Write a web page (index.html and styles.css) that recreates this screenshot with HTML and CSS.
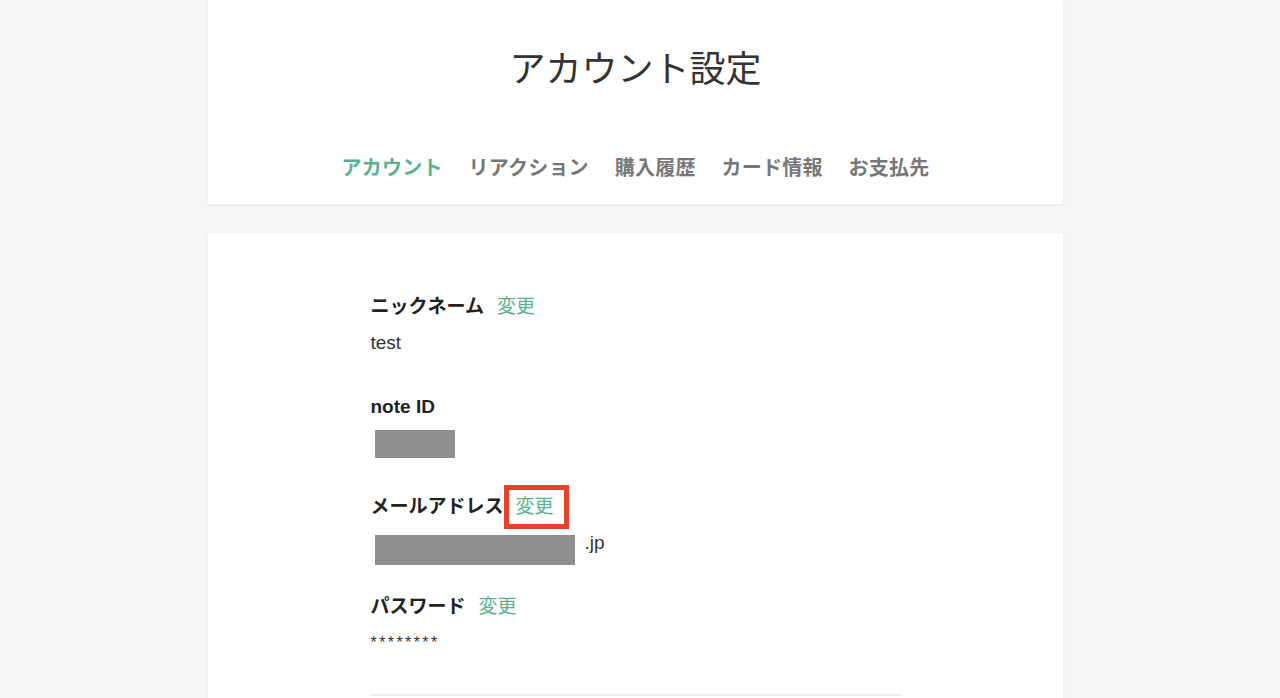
FILE: index.html
```html
<!DOCTYPE html>
<html lang="ja">
<head>
<meta charset="utf-8">
<title>アカウント設定</title>
<link rel="stylesheet" href="styles.css">
</head>
<body>
<div class="page">
  <header class="card head">
    <h1 class="title">アカウント設定</h1>
    <nav class="tabs">
      <a class="tab active">アカウント</a>
      <a class="tab">リアクション</a>
      <a class="tab">購入履歴</a>
      <a class="tab">カード情報</a>
      <a class="tab">お支払先</a>
    </nav>
  </header>
  <main class="card body">
    <div class="inner">
      <section class="field">
        <div class="label">ニックネーム<a class="edit">変更</a></div>
        <div class="value">test</div>
      </section>
      <section class="field">
        <div class="label">note ID</div>
        <div class="value"><span class="mask mask-id"></span></div>
      </section>
      <section class="field">
        <div class="label">メールアドレス<a class="edit boxed">変更</a></div>
        <div class="value"><span class="mask mask-mail"></span><span class="suffix">.jp</span></div>
      </section>
      <section class="field">
        <div class="label">パスワード<a class="edit">変更</a></div>
        <div class="value stars">********</div>
      </section>
      <hr class="rule">
    </div>
  </main>
</div>
</body>
</html>
```
FILE: styles.css
```css
html, body {
  margin: 0;
  padding: 0;
}
body {
  background: #f5f7f6;
  font-family: "Liberation Sans", "Noto Sans CJK JP", sans-serif;
  color: #222;
  height: 698px;
  overflow: hidden;
}
.page {
  width: 855px;
  margin: 0 0 0 208px;
}
.card {
  background: #fff;
  box-shadow: 0 1px 3px rgba(0,0,0,0.06);
}
.head {
  height: 204px;
  box-sizing: border-box;
  padding-top: 42px;
  text-align: center;
}
.title {
  margin: 0;
  font-family: "Noto Sans CJK JP", sans-serif;
  font-weight: 400;
  font-size: 36px;
  line-height: 48px;
  color: #333;
  letter-spacing: 0;
}
.tabs {
  display: flex;
  justify-content: center;
  gap: 26px;
  margin-top: 63px;
  padding-left: 0;
}
.tab {
  font-family: "Noto Sans CJK JP", sans-serif;
  font-weight: 700;
  font-size: 20px;
  line-height: 28px;
  color: #777;
  letter-spacing: 0.2px;
}
.tab.active {
  color: #5ab28e;
}
.body {
  margin-top: 29px;
  height: 500px;
}
.inner {
  width: 530px;
  margin: 0 auto;
  padding-top: 60px;
  box-sizing: border-box;
}
.field {
  height: 100px;
}
.label {
  font-family: "Liberation Sans", "Noto Sans CJK JP", sans-serif;
  font-weight: 700;
  font-size: 19px;
  line-height: 28px;
  height: 28px;
  color: #222;
  display: flex;
  align-items: center;
}
.edit {
  font-weight: 400;
  color: #5ab28e;
  margin-left: 13px;
}
.edit.boxed {
  margin-left: 0;
  border: 5px solid #e8412a;
  padding: 3px 10px 3px 7px;
  margin-top: -9px;
  margin-bottom: -8px;
  line-height: 28px;
}
.value {
  margin-top: 11px;
  font-size: 19px;
  line-height: 22px;
  color: #333;
  display: flex;
  align-items: flex-start;
}
.mask {
  display: block;
  background: #8e8e8e;
  margin-left: 4px;
}
.mask-id {
  width: 80px;
  height: 28px;
  margin-top: -2px;
}
.mask-mail {
  width: 200px;
  height: 30px;
  margin-top: 3px;
}
.suffix {
  margin-left: 10px;
  margin-top: 0;
}
.stars {
  font-size: 16px;
  letter-spacing: 2.4px;
  margin-top: 11px;
}
.rule {
  border: 0;
  border-top: 2px solid #ececec;
  margin: 1px 0 0 0;
}
```
